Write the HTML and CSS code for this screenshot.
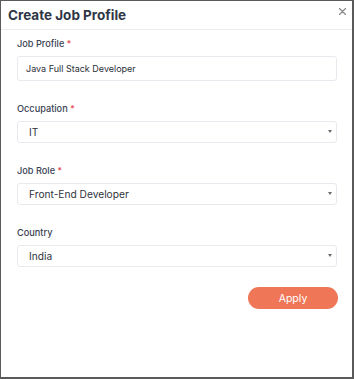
FILE: index.html
```html
<!DOCTYPE html>
<html lang="en">
<head>
    <meta charset="UTF-8">
    <meta name="viewport" content="width=device-width, initial-scale=1.0">
    <title>Create Job Profile</title>
    <link rel="stylesheet" href="styles.css">
</head>
<body>
    <div class="modal">
        <div class="modal-header">
            <h2>Create Job Profile</h2>
            <button class="close-btn" aria-label="Close">
                <svg width="7" height="7" viewBox="0 0 7 7">
                    <path d="M0.5 0.5 L6.5 6.5 M6.5 0.5 L0.5 6.5" stroke="#8a8a8a" stroke-width="1.3" stroke-linecap="round"/>
                </svg>
            </button>
        </div>

        <div class="modal-body">
            <div class="field">
                <label>Job Profile <span class="req">*</span></label>
                <input type="text" class="text-input" value="Java Full Stack Developer">
            </div>

            <div class="field">
                <label>Occupation <span class="req">*</span></label>
                <div class="select">IT<span class="caret"></span></div>
            </div>

            <div class="field">
                <label>Job Role <span class="req">*</span></label>
                <div class="select">Front-End Developer<span class="caret"></span></div>
            </div>

            <div class="field">
                <label>Country</label>
                <div class="select">India<span class="caret"></span></div>
            </div>

            <div class="actions">
                <button class="apply-btn">Apply</button>
            </div>
        </div>
    </div>
</body>
</html>
```

FILE: styles.css
```css
* {
    box-sizing: border-box;
}
body {
    margin: 0;
    font-family: Inter, "Open Sans", Arial, sans-serif;
    background: #fff;
}
.modal {
    width: 354px;
    height: 379px;
    border-top: 1px solid #5a5a5a;
    border-left: 1px solid #5a5a5a;
    border-right: 2px solid #5a5a5a;
    border-bottom: 2px solid #5a5a5a;
    background: #fff;
}
.modal-header {
    height: 29px;
    display: flex;
    align-items: center;
    justify-content: space-between;
    padding: 0 6px 0 7px;
    border-bottom: 1px solid #ececf0;
}
.modal-header h2 {
    margin: 0;
    font-size: 13.5px;
    font-weight: 700;
    color: #2f3645;
}
.close-btn {
    border: none;
    background: none;
    padding: 0;
    width: 8px;
    height: 8px;
    display: flex;
    align-items: center;
    justify-content: center;
    margin-top: -8px;
    cursor: pointer;
}
.modal-body {
    padding: 7px 15px 0 16px;
}
.field {
    margin-bottom: 21px;
}
.field label {
    display: block;
    font-size: 9.2px;
    font-weight: 500;
    line-height: 14px;
    color: #3a4252;
    margin-bottom: 5px;
}
.req {
    color: #e5484d;
    font-size: 8.5px;
}
.text-input {
    display: block;
    width: 100%;
    height: 25px;
    border: 1px solid #e8e9ee;
    border-radius: 3px;
    padding: 0 8px;
    font-family: inherit;
    font-size: 9px;
    color: #2b2f38;
    outline: none;
}
.select {
    position: relative;
    height: 22px;
    border: 1px solid #e8e9ee;
    border-radius: 3px;
    padding: 0 11px;
    display: flex;
    align-items: center;
    font-size: 10.2px;
    color: #2f333c;
}
.caret {
    position: absolute;
    right: 4px;
    top: 8px;
    width: 0;
    height: 0;
    border-left: 2.5px solid transparent;
    border-right: 2.5px solid transparent;
    border-top: 3px solid #6b6b6b;
}
.actions {
    display: flex;
    justify-content: flex-end;
    margin-top: -1px;
    margin-right: -1px;
}
.apply-btn {
    width: 90px;
    height: 22px;
    border: none;
    border-radius: 11px;
    background: #ef7657;
    color: #fff;
    font-family: inherit;
    font-size: 10.5px;
    cursor: pointer;
}
```
